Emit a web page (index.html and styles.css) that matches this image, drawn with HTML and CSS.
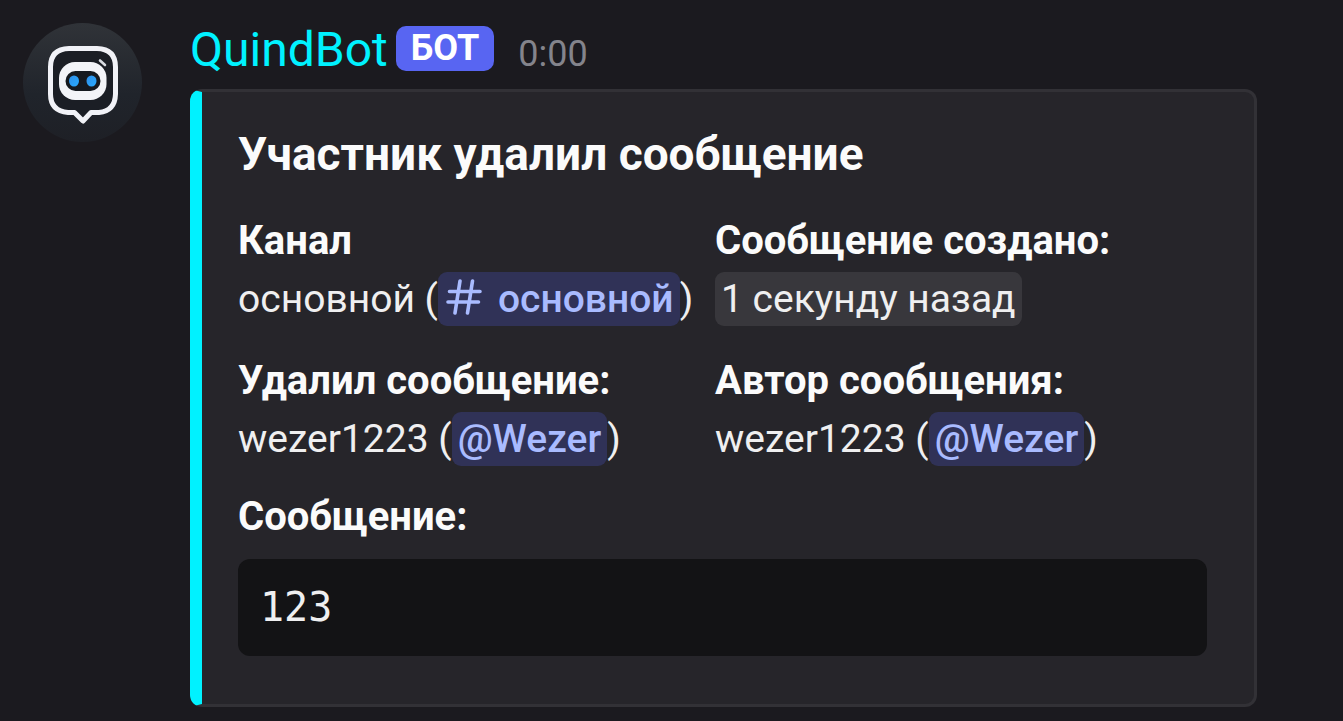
FILE: index.html
```html
<!DOCTYPE html>
<html lang="ru">
<head>
<meta charset="utf-8">
<meta name="viewport" content="width=device-width, initial-scale=1">
<title>QuindBot</title>
<link rel="stylesheet" href="styles.css">
</head>
<body>
<article class="message">
  <svg class="avatar" viewBox="0 0 120 120" role="img" aria-label="QuindBot">
    <defs>
      <linearGradient id="disc" x1="0" y1="0" x2="0" y2="1">
        <stop offset="0" stop-color="#303338"/>
        <stop offset="0.6" stop-color="#20242b"/>
        <stop offset="1" stop-color="#1e2026"/>
      </linearGradient>
      <linearGradient id="eye" x1="0" y1="0" x2="1" y2="1">
        <stop offset="0" stop-color="#2f8fe8"/>
        <stop offset="1" stop-color="#27aaff"/>
      </linearGradient>
    </defs>
    <circle cx="60.500" cy="60.500" r="59.500" fill="url(#disc)"/>
    <path d="M47 26.500H75Q93.500 27 93.500 45V72Q93 89 77 90.500H69L61 99L52.500 90.500H46Q28.500 89 28.500 72V45Q28.500 27 47 26.500Z" fill="#1b1e25" stroke="#f1f2f7" stroke-width="5" stroke-linejoin="round"/>
    <rect x="37" y="40" width="47.500" height="38" rx="16" fill="#f3f4f8"/>
    <rect x="43.500" y="49" width="35" height="20" rx="10" fill="#15191f"/>
    <ellipse cx="52" cy="59" rx="5" ry="5.500" fill="url(#eye)"/>
    <ellipse cx="69.500" cy="59" rx="5" ry="5.500" fill="url(#eye)"/>
    <path d="M75 39.500Q81 41 84 48" fill="none" stroke="#1b1e25" stroke-width="2"/>
    <path d="M78 38.500L83 43" fill="none" stroke="#d9dce2" stroke-width="2.600" stroke-linecap="round"/>
  </svg>
  <div class="content">
    <header class="meta">
      <span class="author">QuindBot</span>
      <span class="tag">БОТ</span>
      <time class="time">0:00</time>
    </header>
    <section class="embed">
      <h2 class="title">Участник удалил сообщение</h2>
      <div class="fields">
        <div class="field">
          <h3 class="name">Канал</h3>
          <p class="value">основной (<a class="mention" href="#channel"><svg class="hash" viewBox="0 0 36 36" aria-hidden="true"><path d="M14 2L9 34M26.500 2L21.500 34M3.500 12.500H34M2 23H32.500" fill="none" stroke="currentColor" stroke-width="3.600" stroke-linecap="round"/></svg>основной</a>)</p>
        </div>
        <div class="field">
          <h3 class="name">Сообщение создано:</h3>
          <p class="value"><time class="stamp">1 секунду назад</time></p>
        </div>
        <div class="field">
          <h3 class="name">Удалил сообщение:</h3>
          <p class="value">wezer1223 (<a class="mention" href="#user">@Wezer</a>)</p>
        </div>
        <div class="field">
          <h3 class="name">Автор сообщения:</h3>
          <p class="value">wezer1223 (<a class="mention" href="#user">@Wezer</a>)</p>
        </div>
      </div>
      <h3 class="name">Сообщение:</h3>
      <pre class="code"><code>123</code></pre>
    </section>
  </div>
</article>
</body>
</html>
```
FILE: styles.css
```css
* { box-sizing: border-box; }
body {
  margin: 0;
  background: #1b1a1f;
  color: #efeff0;
  font-family: Roboto, "Noto Sans", sans-serif;
  font-size: 39px;
  line-height: 56px;
}
h2, h3, p, pre { margin: 0; }
.message {
  display: flex;
  align-items: flex-start;
  gap: 48px;
  padding: 22px 86px 15px 22px;
}
.avatar { flex: none; width: 120px; height: 120px; }
.content { flex: 1; min-width: 0; }
.meta {
  display: flex;
  align-items: baseline;
  height: 67px;
}
.author { color: #00f2ff; font-size: 48px; }
.tag {
  align-self: flex-start;
  margin: 4px 0 0 8px;
  padding: 0 15px;
  border-radius: 10px;
  background: #5865f2;
  color: #fff;
  font-size: 36px;
  font-weight: 700;
  line-height: 45px;
}
.time { margin-left: 24px; color: #84848c; font-size: 36px; }
.embed {
  padding: 34px 47px 48px 36px;
  border: 3px solid #323136;
  border-left: 12px solid #00f2ff;
  border-radius: 12px;
  background: #26252a;
}
.title {
  margin-bottom: 31px;
  color: #fbfbfb;
  font-size: 46px;
  font-weight: 700;
  line-height: 56px;
}
.fields {
  display: grid;
  grid-template-columns: minmax(0, 453fr) minmax(0, 492fr);
  gap: 24px;
  margin-bottom: 20px;
}
.field { white-space: nowrap; }
.name {
  color: #fbfbfb;
  font-size: 40px;
  font-weight: 700;
  line-height: 56px;
}
.value { line-height: 60px; }
.mention, .stamp { display: inline-block; border-radius: 9px; line-height: 54px; }
.mention {
  padding: 0 6px;
  background: #303257;
  color: #a9bbff;
  font-weight: 500;
  text-decoration: none;
}
.stamp { padding: 0 6px; background: #38373c; }
.hash { width: 36px; height: 36px; margin: 0 16px 0 2px; vertical-align: -3px; }
.code {
  margin-top: 14px;
  padding: 20px 22px;
  border-radius: 12px;
  background: #131315;
}
.code code { font-family: "DejaVu Sans Mono", monospace; font-size: 40px; }
```
